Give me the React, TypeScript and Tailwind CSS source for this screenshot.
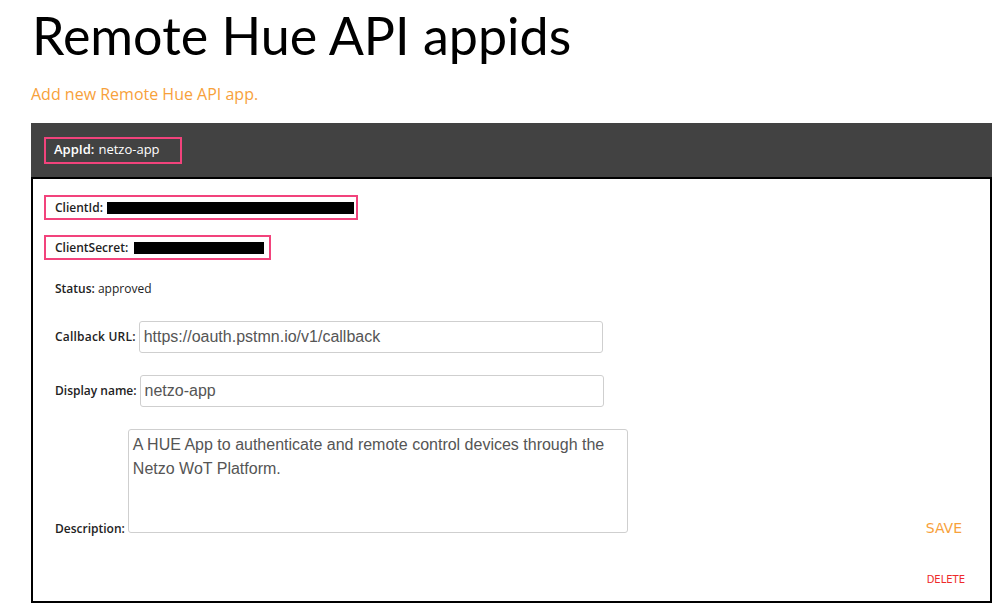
import React from "react";

const labelFont = { fontFamily: '"Open Sans", "Noto Sans", sans-serif' };
const inputFont = { fontFamily: '"Liberation Sans", Arial, sans-serif' };

function App() {
  return (
    <div className="min-h-screen bg-white pl-[31px] pr-[11px]" style={labelFont}>
      <h1
        className="pl-[1px] pt-[6px] text-[52px] leading-[58px] text-black"
        style={{ fontFamily: 'Lato, "Noto Sans", sans-serif' }}
      >
        Remote Hue API appids
      </h1>
      <a href="#" className="mt-[20px] block text-[16px] leading-[20px] text-[#f7a13b]">
        Add new Remote Hue API app.
      </a>

      {/* app card */}
      <div className="mt-[19px] w-[961px]">
        <div className="flex h-[54px] items-center bg-[#424242] pl-[13px]">
          <div className="flex h-[27px] items-center border-2 border-[#f2437c] pl-[8px] pr-[20px] text-[13px] text-white">
            <b className="font-semibold">AppId:</b>
            <span className="ml-[4px]">netzo-app</span>
          </div>
        </div>
        <div className="flex h-[426px] flex-col border-2 border-black pl-[11px] pr-[26px] pt-[16px] text-[12px] text-[#222]">
          <div className="flex h-[25px] w-[314px] items-center border-2 border-[#f2437c] pl-[9px]">
            <span className="font-semibold">ClientId:</span>
            <span className="ml-[4px] h-[12px] w-[247px] bg-black" />
          </div>
          <div className="mt-[15px] flex h-[25px] w-[227px] items-center border-2 border-[#f2437c] pl-[9px]">
            <span className="font-semibold">ClientSecret:</span>
            <span className="ml-[6px] h-[12px] w-[130px] bg-black" />
          </div>
          <div className="mt-[21px] pl-[11px] leading-[16px]">
            <span className="font-semibold">Status:</span> approved
          </div>

          <div className="mt-[24px] flex items-center pl-[11px]">
            <span className="font-semibold tracking-[0.2px]">Callback URL:</span>
            <input
              className="ml-[3px] h-[32px] w-[464px] rounded-[3px] border border-[#cfcfcf] px-[4px] text-[16px] text-[#555] outline-none"
              style={inputFont}
              defaultValue="https://oauth.pstmn.io/v1/callback"
            />
          </div>

          <div className="mt-[22px] flex items-center pl-[11px]">
            <span className="font-semibold">Display name:</span>
            <input
              className="ml-[3px] h-[32px] w-[464px] rounded-[3px] border border-[#cfcfcf] px-[4px] text-[16px] text-[#555] outline-none"
              style={inputFont}
              defaultValue="netzo-app"
            />
          </div>

          <div className="mt-[22px] flex items-end pl-[11px]">
            <span className="mb-[-3px] font-semibold leading-[14px]">Description:</span>
            <textarea
              className="ml-[3px] h-[104px] w-[500px] resize-none rounded-[3px] border border-[#cfcfcf] px-[4px] pt-[3px] text-[16px] leading-[24px] text-[#555] outline-none"
              style={inputFont}
              defaultValue="A HUE App to authenticate and remote control devices through the Netzo WoT Platform."
            />
            <button
              className="mb-[-6px] ml-auto mr-[2px] text-[14px] uppercase text-[#f7a13b]"
              style={{ fontFamily: '"DejaVu Sans", sans-serif' }}
            >
              Save
            </button>
          </div>

          <div className="mt-[39px] flex justify-end">
            <button
              className="mr-[-1px] text-[10px] uppercase text-[#ee2a2a]"
              style={{ fontFamily: '"DejaVu Sans", sans-serif' }}
            >
              Delete
            </button>
          </div>
        </div>
      </div>
    </div>
  );
}

export default App;
